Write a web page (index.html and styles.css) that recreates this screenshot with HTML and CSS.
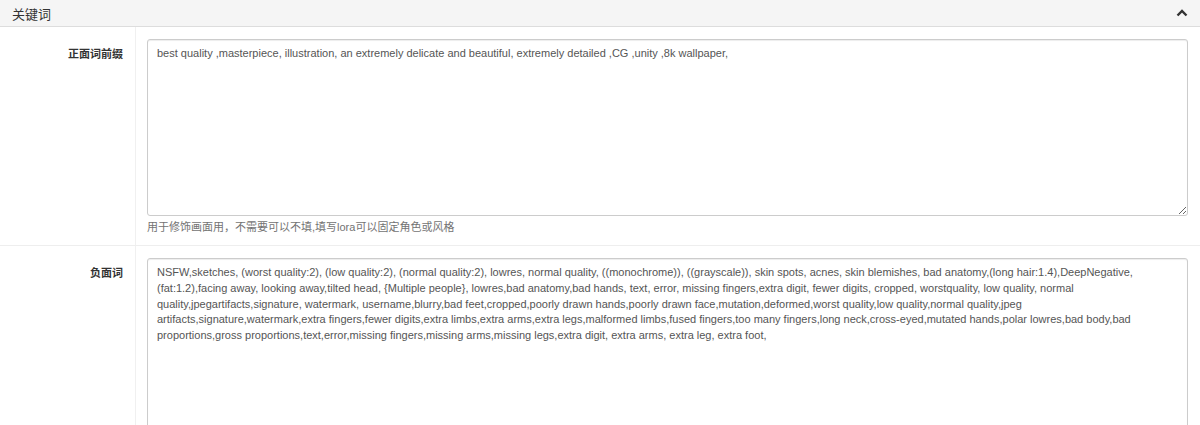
FILE: index.html
```html
<!DOCTYPE html>
<html lang="zh">
<head>
    <meta charset="UTF-8">
    <title>关键词</title>
    <link rel="stylesheet" href="styles.css">
</head>
<body>
    <div class="panel">
        <div class="panel-heading">
            <span>关键词</span>
            <svg class="chevron" width="12" height="8" viewBox="0 0 12 8">
                <path d="M1.5 6.5 L6 2 L10.5 6.5" fill="none" stroke="#333" stroke-width="2.4"/>
            </svg>
        </div>
        <div class="form-row">
            <label class="row-label" for="prefix">正面词前缀</label>
            <div class="row-field">
                <textarea id="prefix" class="prompt-box">best quality ,masterpiece, illustration, an extremely delicate and beautiful, extremely detailed ,CG ,unity ,8k wallpaper,</textarea>
                <p class="help">用于修饰画面用，不需要可以不填,填写lora可以固定角色或风格</p>
            </div>
        </div>
        <div class="form-row">
            <label class="row-label" for="negative">负面词</label>
            <div class="row-field">
                <textarea id="negative" class="prompt-box tall">NSFW,sketches, (worst quality:2), (low quality:2), (normal quality:2), lowres, normal quality, ((monochrome)), ((grayscale)), skin spots, acnes, skin blemishes, bad anatomy,(long hair:1.4),DeepNegative,(fat:1.2),facing away, looking away,tilted head, {Multiple people}, lowres,bad anatomy,bad hands, text, error, missing fingers,extra digit, fewer digits, cropped, worstquality, low quality, normal quality,jpegartifacts,signature, watermark, username,blurry,bad feet,cropped,poorly drawn hands,poorly drawn face,mutation,deformed,worst quality,low quality,normal quality,jpeg artifacts,signature,watermark,extra fingers,fewer digits,extra limbs,extra arms,extra legs,malformed limbs,fused fingers,too many fingers,long neck,cross-eyed,mutated hands,polar lowres,bad body,bad proportions,gross proportions,text,error,missing fingers,missing arms,missing legs,extra digit, extra arms, extra leg, extra foot,</textarea>
            </div>
        </div>
    </div>
</body>
</html>
```

FILE: styles.css
```css
body {
    margin: 0;
    font-family: 'Liberation Sans', 'Noto Sans CJK SC', sans-serif;
    font-size: 11px;
    color: #333;
    background: #fff;
    overflow: hidden;
}

.panel {
    background: #fff;
}

.panel-heading {
    display: flex;
    justify-content: space-between;
    align-items: center;
    height: 26px;
    padding: 0 12px;
    background: #f5f5f5;
    border-bottom: 1px solid #ddd;
    font-size: 13px;
    color: #333;
}

.form-row {
    display: flex;
    border-bottom: 1px solid #eee;
}

.row-label {
    width: 123px;
    flex-shrink: 0;
    padding: 18px 12px 0 0;
    text-align: right;
    font-weight: bold;
    color: #333;
    border-right: 1px solid #f0f0f0;
}

.row-field {
    flex: 1;
    padding: 12px 12px 10px 11px;
}

.prompt-box {
    display: block;
    box-sizing: border-box;
    width: 100%;
    height: 177px;
    margin: 0;
    padding: 6px 9px;
    border: 1px solid #ccc;
    border-radius: 3px;
    box-shadow: inset 0 1px 1px rgba(0, 0, 0, 0.075);
    font-family: 'Liberation Sans', 'Noto Sans CJK SC', sans-serif;
    font-size: 11px;
    line-height: 15.8px;
    color: #555;
    resize: vertical;
}

.prompt-box.tall {
    height: 240px;
}

.help {
    margin: 3px 0 0;
    color: #737373;
    line-height: 16px;
}
```
